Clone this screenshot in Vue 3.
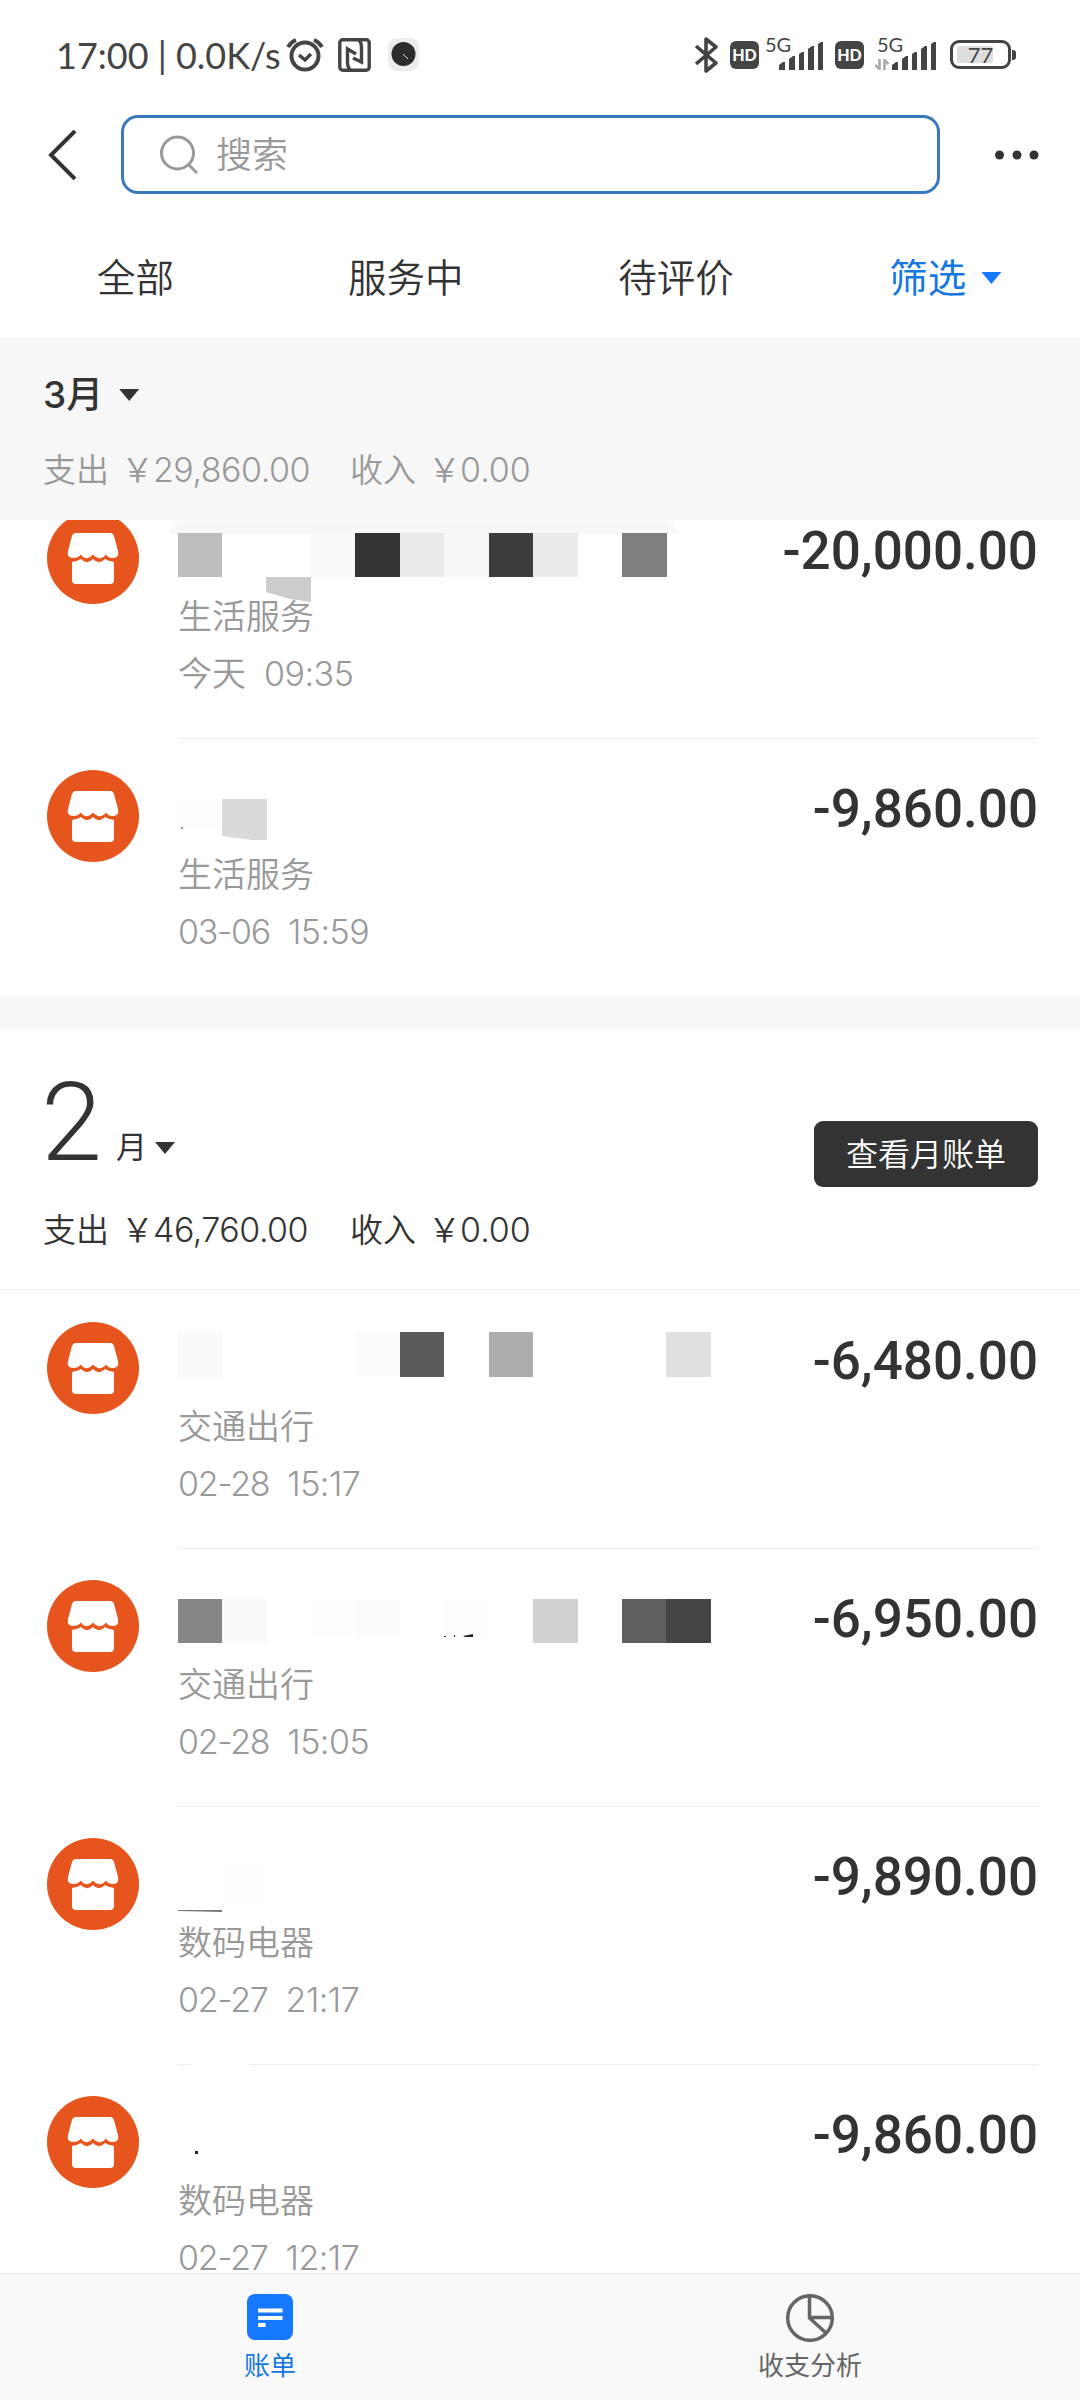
<script setup>
const tabs = ['全部', '服务中', '待评价']

// Masked merchant names: cells are measured from the row's content origin.
const march = [
  {
    id: 1, category: '生活服务', time: '今天 09:35', amount: '-20,000.00',
    cells: [
      { d: 'M-11 53 L0 41 H491 L502 53Z', c: '#f8f8f8' },
      { d: 'M0 53H44V97H0Z', c: '#bdbdbd' },
      { d: 'M133 53H178V97H133Z', c: '#fafafa' },
      { d: 'M177 53H222V97H177Z', c: '#333333' },
      { d: 'M222 53H266V97H222Z', c: '#eaeaea' },
      { d: 'M266 53H311V97H266Z', c: '#f7f7f7' },
      { d: 'M311 53H355V97H311Z', c: '#3d3d3d' },
      { d: 'M355 53H400V97H355Z', c: '#ebebeb' },
      { d: 'M444 53H489V97H444Z', c: '#7f7f7f' },
      { d: 'M88 97H133V122L112 119L88 112Z', c: '#cccccc' },
    ],
  },
  {
    id: 2, category: '生活服务', time: '03-06 15:59', amount: '-9,860.00',
    cells: [
      { d: 'M0 62H44V92H0Z', c: '#fdfdfd' },
      { d: 'M44 61H89V102H74L44 98Z', c: '#d9d9d9' },
      { d: 'M3 89h2v2h-2Z', c: '#999999' },
    ],
  },
]

const february = [
  {
    id: 3, category: '交通出行', time: '02-28 15:17', amount: '-6,480.00',
    cells: [
      { d: 'M0 42H44V87H0Z', c: '#fafafa' },
      { d: 'M178 42H222V87H178Z', c: '#fcfcfc' },
      { d: 'M222 42H266V87H222Z', c: '#5a5a5a' },
      { d: 'M311 42H355V87H311Z', c: '#adadad' },
      { d: 'M488 42H533V87H488Z', c: '#e0e0e0' },
    ],
  },
  {
    id: 4, category: '交通出行', time: '02-28 15:05', amount: '-6,950.00',
    cells: [
      { d: 'M0 51H44V95H0Z', c: '#868686' },
      { d: 'M44 51H89V95H44Z', c: '#fafafa' },
      { d: 'M133 52H178V90H133Z', c: '#fdfdfd' },
      { d: 'M178 52H222V89H178Z', c: '#fbfbfb' },
      { d: 'M266 52H311V94H266Z', c: '#fefefe' },
      { d: 'M266 88h2v1h-2ZM276 87h1v2h-1ZM285 88L295 86V89H287Z', c: '#222222' },
      { d: 'M355 51H400V95H355Z', c: '#d1d1d1' },
      { d: 'M444 51H488V95H444Z', c: '#606060' },
      { d: 'M488 51H533V95H488Z', c: '#444444' },
    ],
  },
  {
    id: 5, category: '数码电器', time: '02-27 21:17', amount: '-9,890.00',
    cells: [
      { d: 'M44 58H89V100H44Z', c: '#fefefe' },
      { d: 'M0 104H44V106L0 105Z', c: '#777777' },
    ],
  },
  {
    id: 6, category: '数码电器', time: '02-27 12:17', amount: '-9,860.00', broken: true,
    cells: [{ d: 'M17 87h3v3h-3Z', c: '#222222' }],
  },
]

const months = [
  { key: 'march', rows: march },
  { key: 'february', rows: february },
]
const bars = [
  'M0 28v-5l4-3h2v8Z',
  'M10 28V17l4-3h2v14Z',
  'M20 28V12l3-2h2v18Z',
  'M29 28V7l4-3h2v24Z',
  'M39 28V2l3-2h2v28Z',
]
</script>

<template>
  <div class="screen">
    <header class="status">
      <span class="clock">17:00 | 0.0K/s</span>
      <svg class="alarm" width="38" height="36" viewBox="0 0 38 36" fill="none" stroke="#444" stroke-width="4">
        <circle cx="19" cy="19" r="13.5" />
        <path d="M13 18l6 5 6-6" stroke-width="3.5" />
        <path d="M2 10Q5 5 10 3M36 10Q33 5 28 3" />
      </svg>
      <svg class="nfc" width="33" height="34" viewBox="0 0 33 34" fill="none" stroke="#444" stroke-width="3.4">
        <rect x="1.8" y="1.8" width="29.4" height="30.4" rx="3" />
        <path d="M12 32Q9.500 29 9.500 25V11L18 16M21 2Q23.500 5 23.500 9V24L15 20" />
      </svg>
      <svg class="rec" width="31" height="33" viewBox="0 0 31 33">
        <rect width="31" height="33" rx="9" fill="#ececec" />
        <circle cx="15.500" cy="16" r="12" fill="#2c2c2c" />
        <path d="M15 16l5 5" stroke="#ddd" stroke-width="1" />
      </svg>
      <span class="grow"></span>
      <svg class="bt" width="24" height="36" viewBox="0 0 24 36" fill="none" stroke="#444" stroke-width="3.6" stroke-linejoin="round">
        <path d="M1 9l20 17-10 8V2l10 8L1 27" />
      </svg>
      <span class="hd">HD</span>
      <span class="cell">
        <svg class="bars" width="44" height="28" viewBox="0 0 44 28" fill="#444"><path v-for="b in bars" :key="b" :d="b" /></svg>
        <span class="gen">5G</span>
      </span>
      <span class="hd second">HD</span>
      <span class="cell wide">
        <svg class="updown" width="14" height="11" viewBox="0 0 14 11" fill="none" stroke="#aaa" stroke-width="2.6"><path d="M4.500 0v10L0 6M9.500 11V1l4 4" /></svg>
        <svg class="bars" width="44" height="28" viewBox="0 0 44 28" fill="#444"><path v-for="b in bars" :key="b" :d="b" /></svg>
        <span class="gen">5G</span>
      </span>
      <span class="battery"><span class="level"></span><span class="pct">77</span></span>
      <span class="nub"></span>
    </header>

    <div class="searchbar">
      <svg class="back" width="30" height="50" viewBox="0 0 30 50" fill="none" stroke="#333" stroke-width="4"><path d="M27 1L3 25l24 24" /></svg>
      <div class="field">
        <svg width="38" height="40" viewBox="0 0 38 40" fill="none" stroke="#999" stroke-width="3"><circle cx="17.500" cy="18" r="16" /><path d="M29 30l8 8" /></svg>
        <span>搜索</span>
      </div>
      <svg class="more" width="44" height="10" viewBox="0 0 44 10" fill="#333"><circle cx="4.500" cy="5" r="4.500" /><circle cx="22" cy="5" r="4.500" /><circle cx="39" cy="5" r="4.500" /></svg>
    </div>

    <nav class="tabs">
      <span v-for="t in tabs" :key="t" class="tab">{{ t }}</span>
      <span class="tab active">筛选<i class="caret"></i></span>
    </nav>

    <section v-for="m in months" :key="m.key" :class="['month', m.key]">
      <div v-if="m.key === 'march'" class="head-small">
        <div class="title">3月<i class="caret"></i></div>
        <div class="totals"><span class="lab">支出</span><span class="yen">￥</span><span class="num long">29,860.00</span><span class="lab">收入</span><span class="yen">￥</span><span class="num">0.00</span></div>
      </div>
      <div v-else class="head-large">
        <div class="top">
          <span class="big">2</span><span class="unit">月</span><i class="caret"></i>
          <span class="grow"></span>
          <button class="bill">查看月账单</button>
        </div>
        <div class="totals"><span class="lab">支出</span><span class="yen">￥</span><span class="num long">46,760.00</span><span class="lab">收入</span><span class="yen">￥</span><span class="num">0.00</span></div>
      </div>

      <div class="list">
        <article v-for="r in m.rows" :key="r.id" class="row">
          <svg class="shop" width="92" height="92" viewBox="0 0 92 92">
            <circle cx="46" cy="46" r="46" fill="#e6551d" />
            <path d="M29 21H63Q66 21 67 24L71 39Q72.500 46 66 46Q61 46 59 42.500Q53 50 46 42.500Q39 50 34 42.500Q31 46 26 46Q19.500 46 21 39L25 24Q26 21 29 21Z" fill="#fff" />
            <path d="M25 50Q31 49 34 47Q40 53.500 46 47Q52 53.500 58 47Q61 49 67 50V68Q67 72 63 72H29Q25 72 25 68Z" fill="#fff" />
          </svg>
          <div :class="['body', { broken: r.broken }]">
            <svg class="mask" width="534" height="125" viewBox="0 0 534 125"><path v-for="c in r.cells" :key="c.d" :d="c.d" :fill="c.c" /></svg>
            <div class="info">
              <div class="cat">{{ r.category }}</div>
              <div class="time"><span v-for="p in r.time.split(' ')" :key="p" :class="{ date: p.includes('-'), hour: p.includes(':') }">{{ p }}</span></div>
            </div>
            <div class="amount">{{ r.amount }}</div>
          </div>
        </article>
      </div>
    </section>

    <footer class="bottom">
      <div class="item on">
        <svg width="46" height="46" viewBox="0 0 46 46"><rect width="46" height="46" rx="8" fill="#1677ff" /><path d="M11 16.500H35.500M11 24H35.500M11 31H18.500" stroke="#fff" stroke-width="4" /></svg>
        <span>账单</span>
      </div>
      <div class="item">
        <svg width="50" height="48" viewBox="0 0 50 48" fill="none" stroke="#666" stroke-width="3.500" stroke-linejoin="round"><circle cx="25" cy="24" r="22.300" /><path d="M24.500 2V24L41 39M25 23.500H47" /></svg>
        <span>收支分析</span>
      </div>
    </footer>
  </div>
</template>

<style>
body { margin: 0; background: #fff; }
</style>

<style scoped>
* { box-sizing: border-box; }
.screen {
  width: 1080px; height: 2400px; overflow: hidden; background: #fff; color: #333;
  display: flex; flex-direction: column;
  font-family: Inter, "Noto Sans CJK SC", sans-serif; font-weight: 350;
}
.grow { flex: 1; }
svg { display: block; flex: none; }
.caret { flex: none; width: 20px; height: 12px; background: currentColor; clip-path: polygon(0 0, 100% 0, 50% 100%); }

.status { height: 109px; flex: none; display: flex; align-items: center; padding: 0 64px 0 56px; color: #444; }
.clock { width: 229px; font: 400 36px/40px Lato, sans-serif; white-space: nowrap; }
.alarm { margin-left: 1px; }
.nfc { margin-left: 14px; }
.rec { margin-left: 17px; }
.bt { margin-right: 11px; }
.hd { width: 29px; height: 28px; border-radius: 6px; background: #444; color: #fff; font: 900 16px/28px Lato, sans-serif; text-align: center; }
.cell { position: relative; width: 76px; height: 36px; display: flex; justify-content: flex-end; align-items: flex-end; padding: 0 12px 3px 0; }
.cell.wide { width: 86px; padding-right: 14px; }
.gen { position: absolute; left: 6px; top: -3px; font: 400 20px/20px Lato, sans-serif; }
.wide .gen { left: 13px; }
.updown { margin-right: 3px; }
.battery { position: relative; width: 61px; height: 29px; border: 3px solid #444; border-radius: 9px; display: flex; align-items: center; justify-content: center; }
.level { position: absolute; left: 4px; top: 3px; width: 36px; height: 17px; background: #ddd; border-radius: 2px; }
.pct { position: relative; font: 400 22px/22px Lato, sans-serif; }
.nub { width: 4px; height: 10px; margin-left: 1px; border-radius: 0 3px 3px 0; background: #444; }

.searchbar { height: 91px; flex: none; display: flex; align-items: center; padding: 0 41px 0 48px; }
.field { width: 819px; height: 79px; margin-left: 43px; border: 3px solid #3a78bd; border-radius: 17px; display: flex; align-items: center; padding-left: 36px; font-size: 36px; line-height: 50px; color: #999; }
.field span { margin-left: 18px; }
.more { margin-left: auto; }

.tabs { height: 139px; flex: none; display: flex; border-bottom: 1px solid #eee; }
.tab { flex: 1; display: flex; justify-content: center; align-items: center; font-size: 38.500px; line-height: 50px; padding: 18px 0 0 1px; }
.active { color: #1677dd; font-weight: 400; padding-left: 0; }
.active .caret { margin-left: 15px; background: #1677ff; }

.month { flex: none; }
.march { border-bottom: 33px solid #f7f7f7; }
.head-small { height: 181px; background: #f7f7f7; padding: 31px 43px 0; }
.title { display: flex; align-items: center; height: 50px; font-size: 37px; line-height: 50px; font-weight: 500; }
.title .caret { margin-left: 16px; }
.totals { display: flex; align-items: center; height: 46px; font-size: 33px; line-height: 46px; }
.head-small .totals { margin-top: 27px; color: #999; }
.lab { width: 78px; }
.yen { width: 32px; }
.num { width: 197px; font-size: 34px; white-space: nowrap; }
.long { letter-spacing: -0.5px; }
.head-large { height: 261px; padding: 34px 42px 0 43px; border-bottom: 1px solid #eee; }
.top { height: 124px; display: flex; align-items: flex-end; }
.big { font: 300 110px/110px Roboto, sans-serif; margin: 0 0 9px -2px; }
.unit { margin-left: 14px; margin-bottom: 18px; font-size: 31px; line-height: 44px; font-weight: 400; }
.top .caret { margin: 0 0 33px 8px; }
.bill { width: 224px; height: 66px; border: 0; border-radius: 9px; background: #333; color: #fff; font: 350 32px/62px "Noto Sans CJK SC", sans-serif; padding: 0 0 4px; }
.head-large .totals { margin-top: 20px; }

.march .list { height: 476px; overflow: hidden; display: flex; flex-direction: column; justify-content: flex-end; }
.february .list { height: 983px; overflow: hidden; }
.row { height: 258px; flex: none; display: flex; padding: 0 42px 0 47px; }
.shop { margin-top: 32px; }
.body { position: relative; flex: 1; margin-left: 39px; display: flex; justify-content: space-between; border-top: 1px solid #eee; }
.row:first-child .body { border-color: transparent; }
.broken::before { content: ""; position: absolute; left: 14px; top: -1px; width: 57px; height: 1px; background: #fff; }
.mask { position: absolute; left: 0; top: -1px; overflow: visible; }
.info { position: relative; padding-top: 112px; color: #999; font-size: 34px; line-height: 48px; }
.time { display: flex; gap: 18px; margin-top: 9px; }
.date { letter-spacing: -1.3px; }
.hour { letter-spacing: -0.5px; }
.amount { margin-top: 39px; font: 500 53px/62px Roboto, sans-serif; }

.bottom { height: 127px; flex: none; margin-top: auto; background: #f9f9f9; border-top: 1px solid #e5e5e5; display: flex; }
.item { flex: 1; display: flex; flex-direction: column; align-items: center; padding-top: 20px; color: #666; font-size: 26px; line-height: 36px; font-weight: 400; }
.item span { margin-top: 6px; }
.on { color: #1677dd; }
.on span { margin-top: 8px; }
</style>
